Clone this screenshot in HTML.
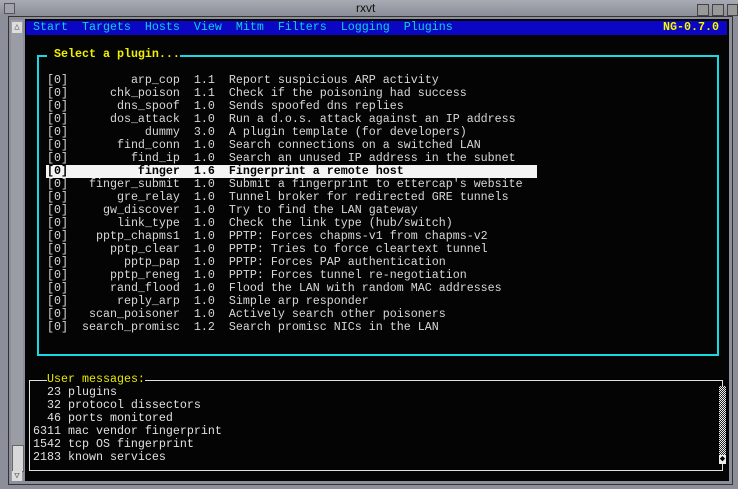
<!DOCTYPE html>
<html><head><meta charset="utf-8"><style>
html,body{margin:0;padding:0}
body{width:738px;height:489px;overflow:hidden;background:#8c8f9a;position:relative;font-family:"Liberation Mono","DejaVu Sans Mono",monospace;}
.t{position:absolute;font-size:11.67px;line-height:13px;white-space:pre;margin:0;}
#title{position:absolute;left:0;top:0;width:738px;height:16px;background:linear-gradient(#a8abb4,#8a8d97);}
#title span{position:absolute;left:356px;top:1px;font-family:"Liberation Sans",sans-serif;font-size:12px;color:#111;}
#tb{position:absolute;left:4px;top:3px;width:9px;height:9px;border:1px solid #555;background:#a0a3ac}
#term{position:absolute;left:25px;top:19px;width:704px;height:462px;background:#040404;}
#frame{position:absolute;left:8px;top:16px;width:723px;height:467px;border:1px solid #333;}
#sb{position:absolute;left:11px;top:20px;width:12px;height:461px;background:#9a9da6;}
#menu{position:absolute;left:26px;top:21px;width:701px;height:14px;background:#0a06c4;}
</style></head><body>
<div id="title"><div id="tb"></div><span>rxvt</span>
<div style="position:absolute;left:697px;top:4px;width:10px;height:10px;border:1px solid #444;background:#999"></div>
<div style="position:absolute;left:712px;top:4px;width:10px;height:10px;border:1px solid #444;background:#999"></div>
<div style="position:absolute;left:727px;top:4px;width:9px;height:10px;border:1px solid #444;background:#999"></div>
</div>
<div id="frame"></div>
<div id="sb">
<div style="position:absolute;left:1px;top:2px;width:10px;height:11px;background:#ddd;color:#555;font-size:9px;text-align:center;line-height:11px">△</div>
<div style="position:absolute;left:1px;top:425px;width:10px;height:25px;background:#d8d8d8;border:1px solid #666"></div>
<div style="position:absolute;left:1px;top:451px;width:10px;height:10px;background:#ddd;color:#555;font-size:9px;text-align:center;line-height:10px">▽</div>
</div>
<div id="term"></div>
<div id="menu"></div>
<div class="t" style="left:26px;top:21px;color:#10d0d8"> Start  Targets  Hosts  View  Mitm  Filters  Logging  Plugins</div>
<div class="t" style="left:663px;top:21px;color:#f8f800;font-weight:bold">NG-0.7.0</div>

<div style="position:absolute;left:37px;top:55px;width:678px;height:297px;border:2px solid #18d8e0;"></div>
<div class="t" style="left:47px;top:48px;color:#f0f000;font-weight:bold;background:#040404"> Select a plugin...</div>

<div class="t" style="left:47px;top:74px;color:#d8d8d8">[0]         arp_cop  1.1  Report suspicious ARP activity
[0]      chk_poison  1.1  Check if the poisoning had success
[0]       dns_spoof  1.0  Sends spoofed dns replies
[0]      dos_attack  1.0  Run a d.o.s. attack against an IP address
[0]           dummy  3.0  A plugin template (for developers)
[0]       find_conn  1.0  Search connections on a switched LAN
[0]         find_ip  1.0  Search an unused IP address in the subnet
 
[0]   finger_submit  1.0  Submit a fingerprint to ettercap's website
[0]       gre_relay  1.0  Tunnel broker for redirected GRE tunnels
[0]     gw_discover  1.0  Try to find the LAN gateway
[0]       link_type  1.0  Check the link type (hub/switch)
[0]    pptp_chapms1  1.0  PPTP: Forces chapms-v1 from chapms-v2
[0]      pptp_clear  1.0  PPTP: Tries to force cleartext tunnel
[0]        pptp_pap  1.0  PPTP: Forces PAP authentication
[0]      pptp_reneg  1.0  PPTP: Forces tunnel re-negotiation
[0]      rand_flood  1.0  Flood the LAN with random MAC addresses
[0]       reply_arp  1.0  Simple arp responder
[0]   scan_poisoner  1.0  Actively search other poisoners
[0]  search_promisc  1.2  Search promisc NICs in the LAN</div>
<div style="position:absolute;left:46px;top:165px;width:491px;height:13px;background:#f4f4f4"></div>
<div class="t" style="left:47px;top:165px;color:#000;font-weight:bold">[0]          finger  1.6  Fingerprint a remote host</div>

<div style="position:absolute;left:29px;top:380px;width:692px;height:89px;border:1px solid #e0e0e0;"></div>
<div class="t" style="left:47px;top:373px;color:#e8e800;background:#040404">User messages:</div>
<div class="t" style="left:33px;top:386px;color:#e0e0e0">  23 plugins
  32 protocol dissectors
  46 ports monitored
6311 mac vendor fingerprint
1542 tcp OS fingerprint
2183 known services</div>
<div style="position:absolute;left:719px;top:386px;width:7px;height:76px;background:repeating-conic-gradient(#eee 0 25%,#222 0 50%) 0 0/2px 2px;"></div>
<div style="position:absolute;left:719px;top:455px;width:7px;height:9px;background:#eee;color:#000;font-size:9px;line-height:9px;text-align:center">◆</div>
</body></html>
